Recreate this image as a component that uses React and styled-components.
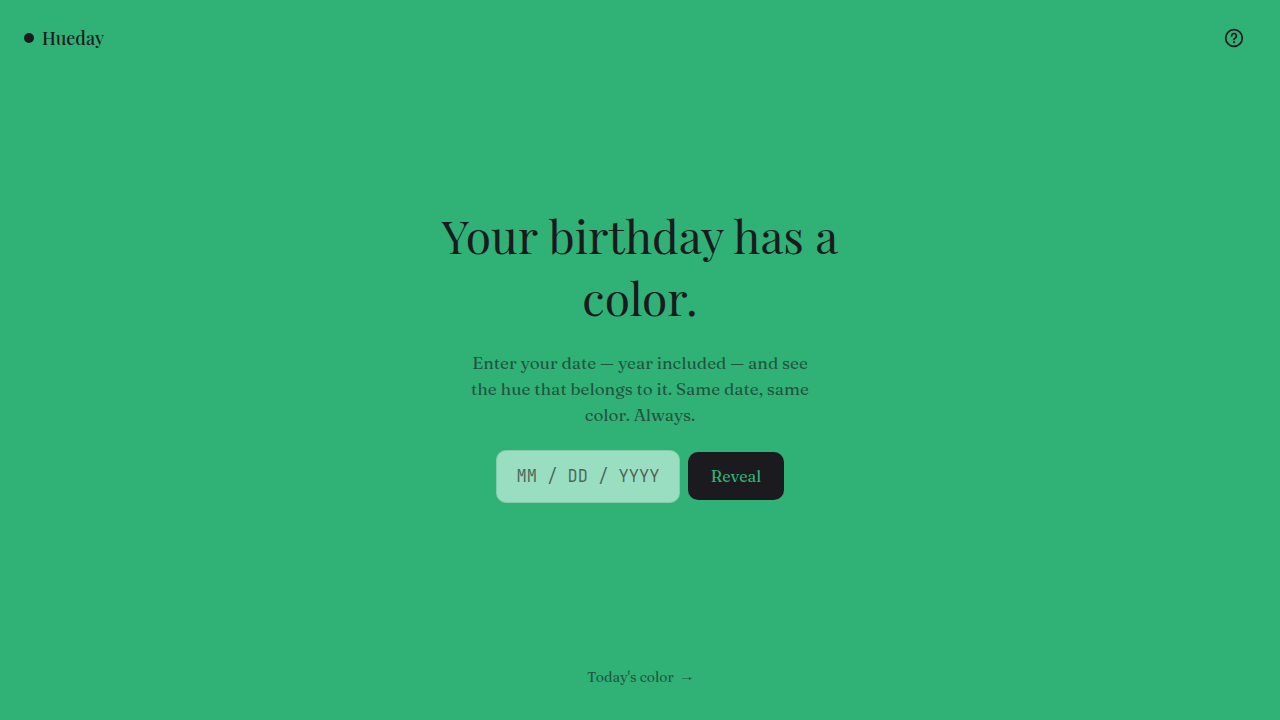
import React, { useState } from "react";
import styled, { createGlobalStyle, ThemeProvider } from "styled-components";

const theme = {
  hue: "#30b176",
  ink: "#1b1b1f",
  muted: "rgba(27, 27, 31, 0.64)",
  field: "#99dec0",
  fieldBorder: "#83cca9",
  display: `"Playfair Display", "Liberation Serif", serif`,
  serif: `Fraunces, "Liberation Serif", serif`,
  mono: `"JetBrains Mono", "Liberation Mono", monospace`,
};

const GlobalStyle = createGlobalStyle`
  * {
    box-sizing: border-box;
  }
  body {
    margin: 0;
    background: ${({ theme }) => theme.hue};
    color: ${({ theme }) => theme.ink};
    font-family: ${({ theme }) => theme.serif};
  }
`;

const Page = styled.div`
  display: flex;
  flex-direction: column;
  min-height: 100vh;
`;

const Header = styled.header`
  display: flex;
  align-items: center;
  justify-content: space-between;
  padding: 16px 24px;
`;

const Brand = styled.a`
  display: flex;
  align-items: center;
  gap: 8px;
  color: inherit;
  font-family: ${({ theme }) => theme.display};
  font-size: 18px;
  font-weight: 500;
  line-height: 24px;
  text-decoration: none;
`;

const Dot = styled.span`
  width: 10px;
  height: 10px;
  border-radius: 50%;
  background: currentColor;
`;

const IconButton = styled.button`
  display: flex;
  align-items: center;
  justify-content: center;
  width: 44px;
  height: 44px;
  padding: 0;
  border: 0;
  background: none;
  color: inherit;
  cursor: pointer;
`;

const Main = styled.main`
  flex: 1;
  display: flex;
  flex-direction: column;
  align-items: center;
  justify-content: center;
  gap: 22px;
  padding: 0 24px;
  text-align: center;
`;

const Title = styled.h1`
  max-width: 440px;
  margin: 0;
  font-family: ${({ theme }) => theme.display};
  font-size: 46px;
  font-weight: 400;
  line-height: 62px;
`;

const Desc = styled.p`
  max-width: 340px;
  margin: 0;
  color: ${({ theme }) => theme.muted};
  font-size: 17px;
  line-height: 26px;
`;

const Form = styled.form`
  display: flex;
  flex-wrap: wrap;
  align-items: center;
  justify-content: center;
  gap: 8px;
`;

const DateInput = styled.input`
  width: 184px;
  height: 53px;
  padding: 0 18px;
  border: 1px solid ${({ theme }) => theme.fieldBorder};
  border-radius: 10px;
  background: ${({ theme }) => theme.field};
  color: ${({ theme }) => theme.ink};
  font-family: ${({ theme }) => theme.mono};
  font-size: 17px;
  text-align: center;
  &::placeholder {
    color: ${({ theme }) => theme.muted};
    opacity: 1;
  }
`;

const RevealButton = styled.button`
  min-width: 96px;
  height: 48px;
  padding: 0 20px;
  border: 0;
  border-radius: 10px;
  background: ${({ theme }) => theme.ink};
  color: ${({ theme }) => theme.hue};
  font-family: inherit;
  font-size: 16px;
  font-weight: 500;
  cursor: pointer;
`;

const Footer = styled.footer`
  display: flex;
  justify-content: center;
  padding: 37px 24px 33px;
`;

const TodayLink = styled.a`
  display: flex;
  align-items: center;
  gap: 7px;
  color: ${({ theme }) => theme.muted};
  font-size: 14px;
  line-height: 20px;
  text-decoration: none;
`;

const HelpIcon = () => (
  <svg
    width="20"
    height="20"
    viewBox="0 0 20 20"
    fill="none"
    stroke="currentColor"
    strokeWidth="1.7"
    strokeLinecap="round"
    aria-hidden="true"
  >
    <circle cx="10" cy="10" r="8.3" />
    <path d="M7.6 7.9a2.4 2.4 0 1 1 3.6 2.1c-.8.4-1.2.8-1.2 1.5" />
    <circle cx="10" cy="14.2" r="1.1" fill="currentColor" stroke="none" />
  </svg>
);

const ArrowIcon = () => (
  <svg
    width="12"
    height="12"
    viewBox="0 0 12 12"
    fill="currentColor"
    aria-hidden="true"
  >
    <path d="M1 7.2h7V6l2.6 1.5L8 9V7.8H1z" />
  </svg>
);

const App = () => {
  const [date, setDate] = useState("");

  return (
    <ThemeProvider theme={theme}>
      <GlobalStyle />
      <Page>
        <Header>
          <Brand href="/">
            <Dot />
            Hueday
          </Brand>
          <IconButton type="button" aria-label="How it works">
            <HelpIcon />
          </IconButton>
        </Header>
        <Main>
          <Title>Your birthday has a color.</Title>
          <Desc>
            Enter your date — year included — and see the hue that belongs to
            it. Same date, same color. Always.
          </Desc>
          <Form onSubmit={(e) => e.preventDefault()}>
            <DateInput
              aria-label="Your birthday"
              inputMode="numeric"
              placeholder="MM / DD / YYYY"
              value={date}
              onChange={(e) => setDate(e.target.value)}
            />
            <RevealButton type="submit">Reveal</RevealButton>
          </Form>
        </Main>
        <Footer>
          <TodayLink href="#today">
            Today's color
            <ArrowIcon />
          </TodayLink>
        </Footer>
      </Page>
    </ThemeProvider>
  );
};

export default App;
